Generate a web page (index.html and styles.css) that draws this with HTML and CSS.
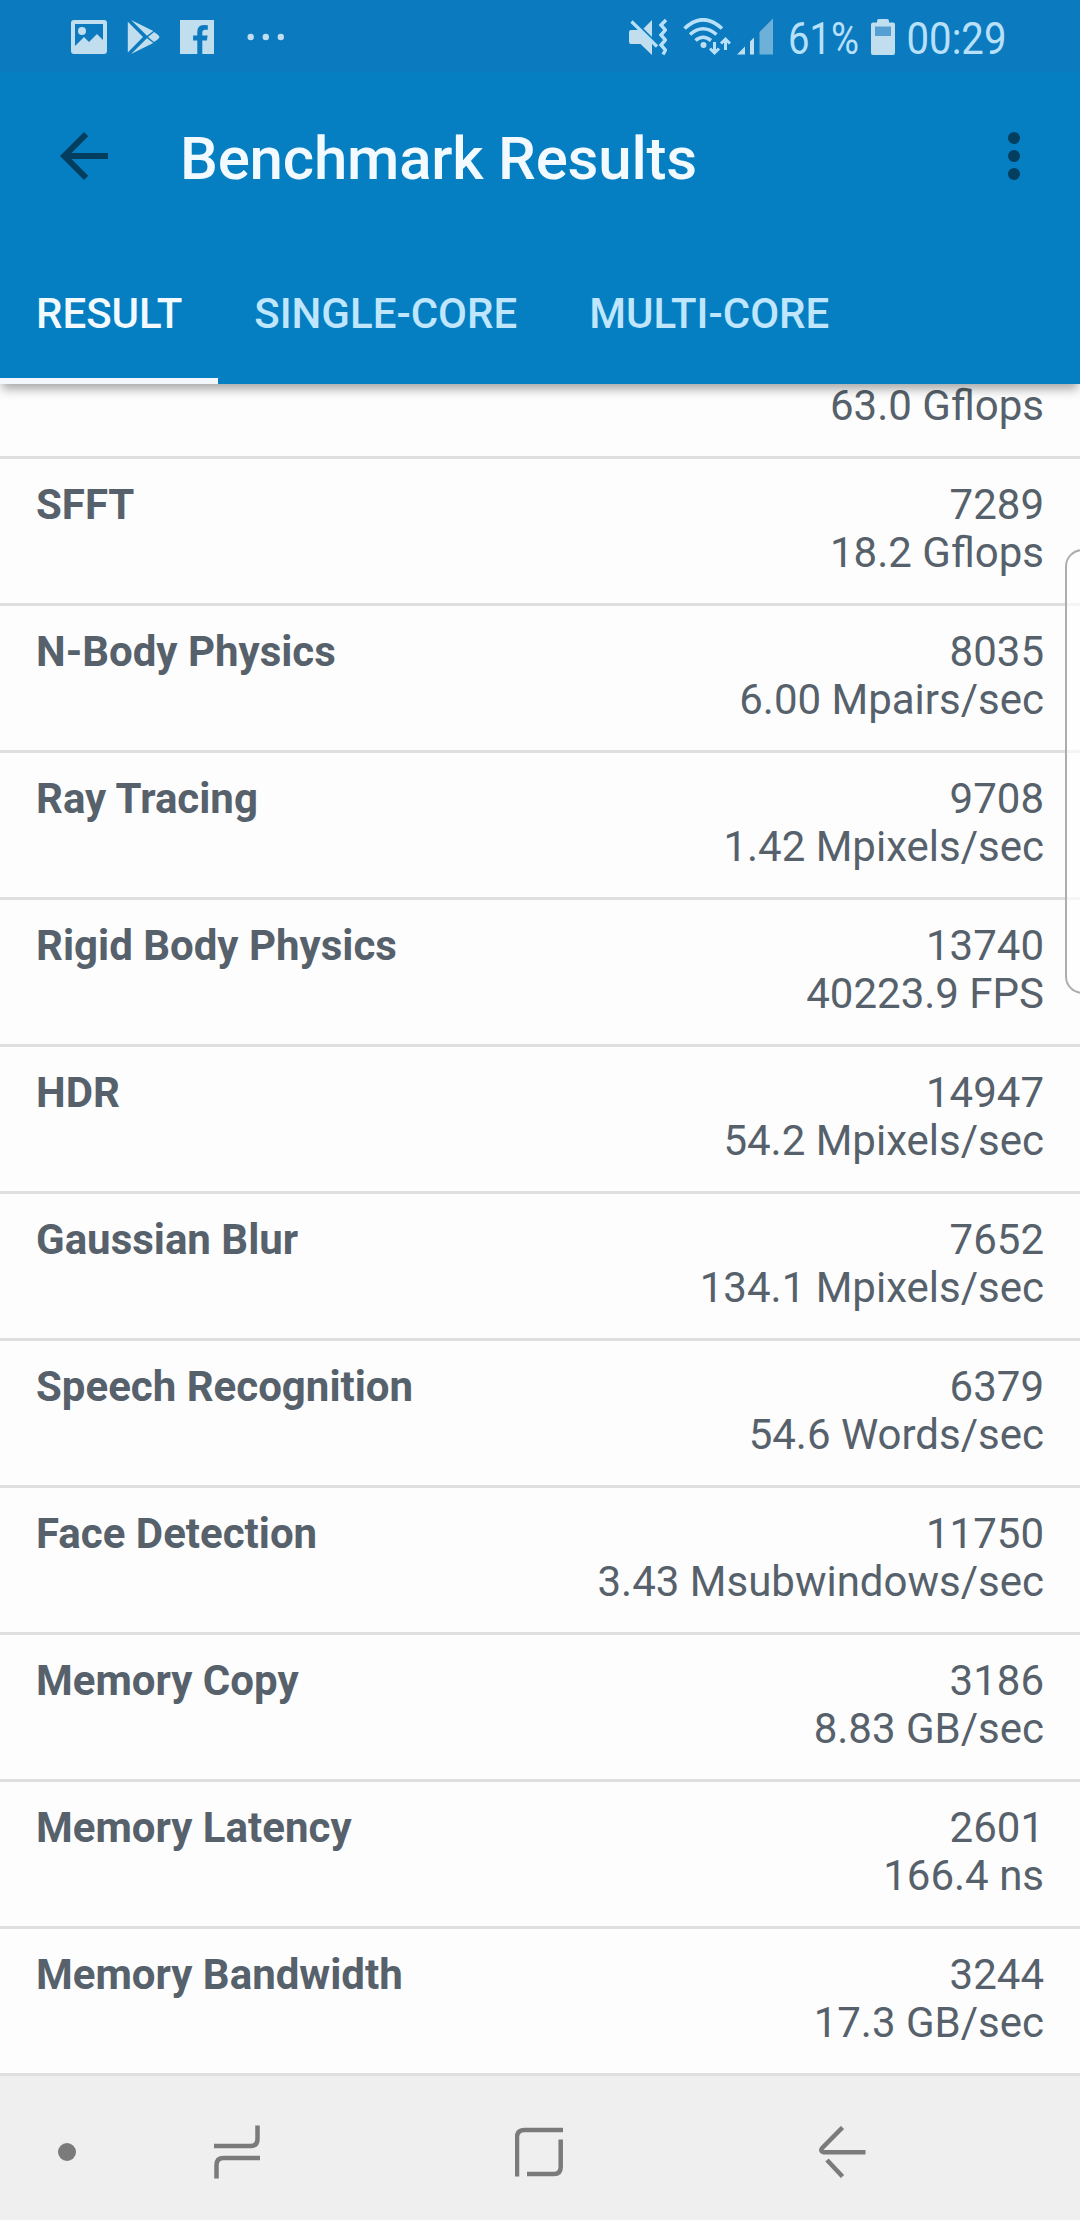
FILE: index.html
```
<!doctype html>
<html lang="en">
<head>
    <meta charset="UTF-8">
    <meta name="viewport" content="width=device-width, initial-scale=1.0">
    <title>Benchmark Results</title>
    <link rel="stylesheet" href="styles.css">
</head>
<body>
<header class="header">
    <div class="status">
        <div class="status__left">
            <svg width="36" height="34" viewBox="0 0 36 34">
                <path fill-rule="evenodd" d="M3 0h30q3 0 3 3v28q0 3-3 3H3q-3 0-3-3V3q0-3 3-3zM4 4v22l9-9 5 5 8-8 6 6V4z"/>
                <circle cx="11" cy="11" r="4"/>
            </svg>
            <svg width="33" height="34" viewBox="0 0 33 34">
                <path d="M.8 1.7L16 17 .8 32.5zM4 0l22.3 11-6.3 4.7zM4 34l22.3-11-6.3-4.7zM21 17l6-5q5 3 5.5 5-.5 2-5.5 5z"/>
            </svg>
            <svg width="34" height="34" viewBox="0 0 34 34">
                <path d="M0 0h34v34H22.3V20.6h4.6l.7-5h-5.3v-3q0-2.8 3-2.8h2.5V5.2q-1.5-.3-4-.3-6.5 0-6.5 7v3.7h-4.200v5h4.200V34H0z"/>
            </svg>
            <svg width="54" height="34" viewBox="0 0 54 34">
                <circle cx="16.700" cy="17" r="3.200"/>
                <circle cx="31.800" cy="17" r="3.200"/>
                <circle cx="46.800" cy="17" r="3.200"/>
            </svg>
        </div>
        <div class="status__right">
            <svg width="38" height="38" viewBox="0 0 38 38">
                <path d="M2 12h9l12 12v13L11.500 26H2q-2 0-2-2V14q0-2 2-2zM14.500 10.500L23 2v17z"/>
                <path class="line" stroke-width="3.200" d="M2.500 3.500L28 28.500"/>
                <path class="line" stroke-width="3.400" d="M37 2l-5 5 4.500 5-4.500 5 4.500 5-4.500 5 4.500 5-2.500 4.500"/>
            </svg>
            <svg class="status__wifi" width="48" height="38" viewBox="0 0 48 38">
                <path class="line" stroke-width="3.600" d="M1.500 10.500Q20-7 39 10.500M7 16.500q13-11.500 26.500 0M12.500 22.500q7.500-6.500 15.500 0"/>
                <circle cx="20.500" cy="27" r="3"/>
                <path class="line" stroke-width="3" d="M31.500 24v11M27 30.500l4.500 4.500 4.500-4.500M42.500 32V21M38 25.500l4.500-4.500 4.500 4.500"/>
            </svg>
            <svg class="status__signal" width="36" height="38" viewBox="0 0 36 38">
                <path d="M0 36.500L8 28.500v8zM13 23.500l4-4v17h-4z"/>
                <path opacity=".55" d="M22.500 14L36 .5v36H22.500z"/>
            </svg>
            <svg class="status__percent" width="72" height="60" viewBox="0 0 72 60">
                <text x="1" y="45" textLength="71" lengthAdjust="spacingAndGlyphs">61%</text>
            </svg>
            <svg class="status__battery" width="24" height="36" viewBox="0 0 24 36">
                <path fill-rule="evenodd" d="M8 0h8q2 0 2 2v1.500h4q2 0 2 2V34q0 2-2 2H2q-2 0-2-2V5.500q0-2 2-2h4V2q0-2 2-2z"/>
                <path fill="#569fd3" d="M4 7.500h16V17H4z"/>
            </svg>
            <svg class="status__clock" width="104" height="60" viewBox="0 0 104 60">
                <text x="1.500" y="45" textLength="100" lengthAdjust="spacingAndGlyphs">00:29</text>
            </svg>
        </div>
    </div>
    <div class="toolbar">
        <svg width="48" height="48" viewBox="0 0 48 48">
            <path d="M48 21H11.500L28.200 4.200 24 0 0 24l24 24 4.200-4.200L11.500 27H48z"/>
        </svg>
        <h1 class="toolbar__title">Benchmark Results</h1>
        <svg width="12" height="48" viewBox="0 0 12 48">
            <circle cx="6" cy="6" r="6"/>
            <circle cx="6" cy="24" r="6"/>
            <circle cx="6" cy="42" r="6"/>
        </svg>
    </div>
    <nav class="tabs">
        <a class="tabs__item tabs__item--active">RESULT</a>
        <a class="tabs__item">SINGLE-CORE</a>
        <a class="tabs__item">MULTI-CORE</a>
    </nav>
</header>
<main class="results">
    <div class="result result--cut">
        <div class="result__value">63.0 Gflops</div>
    </div>
    <div class="result">
        <div class="result__name">SFFT</div>
        <div class="result__value">7289<br>18.2 Gflops</div>
    </div>
    <div class="result">
        <div class="result__name">N-Body Physics</div>
        <div class="result__value">8035<br>6.00 Mpairs/sec</div>
    </div>
    <div class="result">
        <div class="result__name">Ray Tracing</div>
        <div class="result__value">9708<br>1.42 Mpixels/sec</div>
    </div>
    <div class="result">
        <div class="result__name">Rigid Body Physics</div>
        <div class="result__value">13740<br>40223.9 FPS</div>
    </div>
    <div class="result">
        <div class="result__name">HDR</div>
        <div class="result__value">14947<br>54.2 Mpixels/sec</div>
    </div>
    <div class="result">
        <div class="result__name">Gaussian Blur</div>
        <div class="result__value">7652<br>134.1 Mpixels/sec</div>
    </div>
    <div class="result">
        <div class="result__name">Speech Recognition</div>
        <div class="result__value">6379<br>54.6 Words/sec</div>
    </div>
    <div class="result">
        <div class="result__name">Face Detection</div>
        <div class="result__value">11750<br>3.43 Msubwindows/sec</div>
    </div>
    <div class="result">
        <div class="result__name">Memory Copy</div>
        <div class="result__value">3186<br>8.83 GB/sec</div>
    </div>
    <div class="result">
        <div class="result__name">Memory Latency</div>
        <div class="result__value">2601<br>166.4 ns</div>
    </div>
    <div class="result">
        <div class="result__name">Memory Bandwidth</div>
        <div class="result__value">3244<br>17.3 GB/sec</div>
    </div>
</main>
<div class="edge-panel"></div>
<footer class="navbar">
    <svg width="18" height="18" viewBox="0 0 18 18">
        <circle class="dot" cx="9" cy="9" r="9"/>
    </svg>
    <svg class="navbar__recents" width="46" height="54" viewBox="0 0 46 54">
        <path d="M0 21h36.500q7 0 7-7V0.500M46 33H9.500q-7 0-7 7v13.500"/>
    </svg>
    <svg class="navbar__home" width="48" height="50" viewBox="0 0 48 50">
        <path d="M48 3H9.500Q2 3 2 10v39.500M12 47h27q6.700 0 6.700-7V12.500"/>
    </svg>
    <svg class="navbar__back" width="47" height="52" viewBox="0 0 47 52">
        <path d="M46.500 26.200H4.500Q1 25 3 22.200L23.500 1.500M8 34l15.500 16.500"/>
    </svg>
</footer>
</body>
</html>
```
FILE: styles.css
```
body {
    margin: 0;
    width: 1080px;
    height: 2220px;
    position: relative;
    overflow: hidden;
    display: flex;
    flex-direction: column;
    background: #fdfdfd;
    color: #56616b;
    font-family: Roboto, sans-serif;
    font-size: 42px;
    line-height: 48px;
}

svg {
    display: block;
    flex-shrink: 0;
}

.header {
    position: relative;
    height: 384px;
    flex-shrink: 0;
    background: #057fc1;
    box-shadow: 0 7px 10px -2px rgba(0, 0, 0, 0.35);
}

.status {
    height: 72px;
    display: flex;
    justify-content: space-between;
    background: #0c7abf;
    fill: #c0deed;
}

.status__left {
    display: flex;
    gap: 20px;
    padding: 20px 0 0 71px;
}

.status__right {
    display: flex;
    align-items: flex-start;
    padding: 18px 71px 0 0;
}

.status text {
    font-size: 45px;
    fill: #b8e0f8;
}

.status .line {
    fill: none;
    stroke: #b8e0f8;
}

.status__wifi {
    margin-left: 16px;
}

.status__signal {
    margin-left: 6px;
}

.status__percent {
    margin: -9px 0 0 14px;
}

.status__battery {
    margin: 1px 0 0 12px;
}

.status__clock {
    margin: -9px 0 0 10px;
}

.toolbar {
    height: 168px;
    display: flex;
    align-items: center;
    padding: 0 60px;
    fill: #033e5e;
}

.toolbar__title {
    flex: 1;
    margin: 0 0 0 72px;
    padding-top: 5px;
    font-size: 60px;
    font-weight: 500;
    line-height: 70px;
    letter-spacing: -0.2px;
    color: #f2faff;
}

.tabs {
    display: flex;
    height: 144px;
}

.tabs__item {
    box-sizing: border-box;
    height: 144px;
    padding: 50px 36px 0;
    font-weight: 500;
    color: #bfe6fd;
}

.tabs__item--active {
    color: #f2faff;
    border-bottom: 6px solid #f2f8fd;
}

.results {
    flex: 1;
}

.result {
    box-sizing: border-box;
    height: 147px;
    display: flex;
    justify-content: space-between;
    padding: 22px 36px 0;
    border-bottom: 3px solid #dfdfdf;
}

/* row scrolled half under the header */
.result--cut {
    height: 75px;
    justify-content: flex-end;
    padding-top: 0;
    line-height: 44px;
}

.result__name {
    font-weight: 700;
}

.result__value {
    text-align: right;
}

.edge-panel {
    position: absolute;
    top: 549px;
    right: -20px;
    box-sizing: border-box;
    width: 35px;
    height: 445px;
    border: 2px solid #adadad;
    border-radius: 20px;
    background: rgba(254, 254, 254, 0.7);
}

.navbar {
    box-sizing: border-box;
    height: 144px;
    flex-shrink: 0;
    display: flex;
    align-items: center;
    padding: 8px 0 0 58px;
    background: #efefef;
    fill: none;
    stroke: #7b7b7b;
    stroke-width: 4.5px;
}

.dot {
    fill: #7b7b7b;
    stroke: none;
}

.navbar__recents {
    margin-left: 138px;
}

.navbar__home {
    margin-left: 255px;
}

.navbar__back {
    margin-left: 256px;
}
```
